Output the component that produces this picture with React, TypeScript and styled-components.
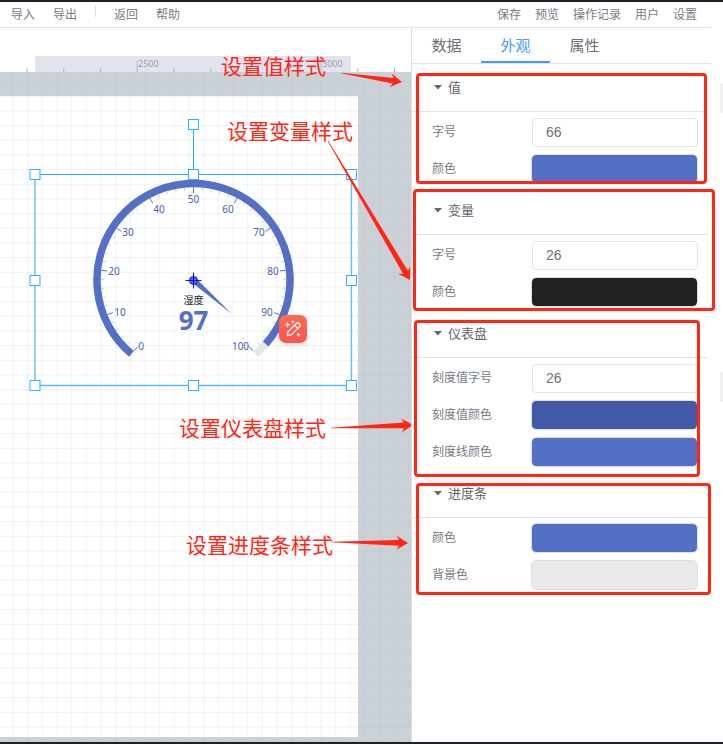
import React from "react";
import styled, { createGlobalStyle } from "styled-components";

const GlobalStyle = createGlobalStyle`
  * { box-sizing: border-box; }
  body { margin: 0; background: #fff; }
  body, button, input { font-family: "Liberation Sans", "Noto Sans CJK SC", sans-serif; }
  button { border: 0; padding: 0; background: none; cursor: pointer; }
`;

const RED = "#ff2616";
const BLUE = "#5470c6";
const SCALE = "#4a5fae";

const Page = styled.div`
  position: relative;
  display: flex;
  flex-direction: column;
  min-height: 100vh;
  border-top: 2px solid #222024;
  border-bottom: 2px solid #222024;
  overflow: hidden;
`;

const Header = styled.header`
  display: flex;
  justify-content: space-between;
  align-items: center;
  height: 26px;
  margin-right: 12px;
  padding: 0 14px 0 11px;
  border-bottom: 1px solid #e1e2e4;
`;

const Menu = styled.nav<{ $gap: number }>`
  display: flex;
  align-items: center;
  gap: ${(p) => p.$gap}px;
`;

const MenuButton = styled.button`
  font-size: 12px;
  line-height: 18px;
  color: #777b84;
  white-space: nowrap;
`;

const Separator = styled.span`
  align-self: flex-start;
  width: 1px;
  height: 11px;
  background: #dcdee2;
`;

const Main = styled.main`
  flex: 1;
  display: flex;
`;

const Workspace = styled.section`
  position: relative;
  flex: 1;
  min-width: 0;
  display: flex;
  flex-direction: column;
`;

const Ruler = styled.div`
  height: 44px;
  svg { display: block; width: 100%; height: 44px; }
`;

const Stage = styled.div`
  position: relative;
  flex: 1;
  overflow: hidden;
  display: flex;
  padding: 24px 53px 5px 0;
  background: #cad2d7;
`;

const Paper = styled.div`
  flex: 1;
  background: #fff;
`;

const Overlay = styled.svg`
  position: absolute;
  inset: 0;
  width: 100%;
  height: 100%;
  overflow: visible;
  pointer-events: none;
`;

const MagicButton = styled.button`
  position: absolute;
  left: 279px;
  top: 243px;
  width: 28px;
  height: 28px;
  border-radius: 7px;
  background: linear-gradient(#ff6b50, #ff5250);
  box-shadow: 0 2px 5px rgba(90, 90, 90, 0.2);
  svg { display: block; }
`;

const Note = styled.div<{ $x: number; $y: number }>`
  position: absolute;
  left: ${(p) => p.$x}px;
  top: ${(p) => p.$y}px;
  font-size: 21px;
  line-height: 28px;
  color: ${RED};
  white-space: nowrap;
`;

const Panel = styled.aside`
  position: relative;
  width: 300px;
  border-left: 1px solid #dcdee0;
`;

const Tabs = styled.div`
  display: flex;
  height: 36px;
  border-bottom: 1px solid #e1e2e4;
`;

const Tab = styled.button<{ $active?: boolean }>`
  width: 69px;
  font-size: 15px;
  color: ${(p) => (p.$active ? "#409eff" : "#6c7079")};
  border-bottom: 2px solid ${(p) => (p.$active ? "#409eff" : "transparent")};
`;

const Section = styled.section`
  padding-right: 4px;
`;

const SectionHead = styled.button`
  display: flex;
  align-items: center;
  gap: 6px;
  width: 100%;
  height: 48px;
  padding-left: 22px;
  border-bottom: 1px solid #e1e2e4;
  font-size: 13px;
  line-height: 18px;
  color: #5f646e;
`;

const Rows = styled.div`
  display: grid;
  grid-auto-rows: 36px;
  gap: 1px;
  padding: 2px 9px 0 20px;
`;

const Row = styled.div`
  display: flex;
  align-items: center;
  justify-content: space-between;
`;

const Label = styled.label`
  font-size: 12px;
  line-height: 18px;
  color: #777b84;
`;

const NumberField = styled.input`
  width: 166px;
  height: 29px;
  padding: 0 13px;
  border: 1px solid #e2e4e9;
  border-radius: 4px;
  font-size: 14px;
  color: #6c7079;
  outline: none;
`;

const ColorField = styled.input`
  appearance: none;
  width: 167px;
  height: 30px;
  padding: 0;
  border: 1px solid #dddfe4;
  border-radius: 5px;
  background: none;
  &::-webkit-color-swatch-wrapper { padding: 0; }
  &::-webkit-color-swatch { border: 0; border-radius: 4px; }
`;

const Frame = styled.div<{ $x: number; $y: number; $w: number; $h: number }>`
  position: absolute;
  left: ${(p) => p.$x}px;
  top: ${(p) => p.$y}px;
  width: ${(p) => p.$w}px;
  height: ${(p) => p.$h}px;
  border: 3px solid ${RED};
  border-radius: 4px;
  pointer-events: none;
`;

const Gutter = styled.div`
  width: 12px;
  padding-top: 55px;
  display: flex;
  flex-direction: column;
  align-items: flex-end;
  gap: 259px;
`;

const Grip = styled.span`
  width: 3px;
  height: 30px;
  border-radius: 3px 0 0 3px;
  background: #eff0f1;
`;

type Field = { label: string; kind: "number" | "color"; value: string };

const sections: { title: string; fields: Field[] }[] = [
  { title: "值", fields: [
    { label: "字号", kind: "number", value: "66" },
    { label: "颜色", kind: "color", value: "#5470c6" },
  ] },
  { title: "变量", fields: [
    { label: "字号", kind: "number", value: "26" },
    { label: "颜色", kind: "color", value: "#222222" },
  ] },
  { title: "仪表盘", fields: [
    { label: "刻度值字号", kind: "number", value: "26" },
    { label: "刻度值颜色", kind: "color", value: "#4159a7" },
    { label: "刻度线颜色", kind: "color", value: "#5470c6" },
  ] },
  { title: "进度条", fields: [
    { label: "颜色", kind: "color", value: "#5470c6" },
    { label: "背景色", kind: "color", value: "#e9e9e9" },
  ] },
];

const frames = [
  { x: 4, y: 45, w: 291, h: 111 },
  { x: 1, y: 161, w: 302, h: 122 },
  { x: 2, y: 292, w: 286, h: 157 },
  { x: 4, y: 455, w: 295, h: 112 },
];

const notes = [
  { text: "设置值样式", x: 221, y: 25 },
  { text: "设置变量样式", x: 227, y: 90 },
  { text: "设置仪表盘样式", x: 179, y: 387 },
  { text: "设置进度条样式", x: 186, y: 504 },
];

const arrows = [
  [341, 45, 402, 54],
  [328, 113, 410, 252],
  [331, 400, 413, 397],
  [331, 514, 408, 515],
];

function Arrow({ points }: { points: number[] }) {
  const [x1, y1, x2, y2] = points;
  const length = Math.hypot(x2 - x1, y2 - y1);
  const angle = (Math.atan2(y2 - y1, x2 - x1) * 180) / Math.PI;
  return (
    <path
      fill={RED}
      transform={`translate(${x1} ${y1}) rotate(${angle})`}
      d={`M0 -0.3L${length - 9} -2.8L${length - 11.5} -7L${length} 0L${length - 11.5} 7L${length - 9} 2.8L0 0.3Z`}
    />
  );
}

const CX = 193.5;
const CY = 208;
const angleOf = (value: number) => ((230 - value * 2.8) * Math.PI) / 180;
const at = (value: number, r: number) => {
  const a = angleOf(value);
  return [CX + r * Math.cos(a), CY - r * Math.sin(a)];
};
const arc = (from: number, to: number, r: number) => {
  const [x1, y1] = at(from, r);
  const [x2, y2] = at(to, r);
  return `M${x1} ${y1}A${r} ${r} 0 ${(to - from) * 2.8 > 180 ? 1 : 0} 1 ${x2} ${y2}`;
};

const labels = [
  [0, 141, 278], [10, 120, 244], [20, 114, 203], [30, 128, 164], [40, 159, 141], [50, 193.5, 131],
  [60, 228, 141], [70, 259, 164], [80, 273, 203], [90, 267, 244], [100, 240.5, 278],
];

const handles = [
  [193.5, 52.5], [35, 102.5], [193.5, 102.5], [351.5, 102.5],
  [35, 208.5], [351.5, 208.5], [35, 313.5], [193.5, 313.5], [351.5, 313.5],
];

function Grid() {
  const lines = Array.from({ length: 80 }, (_, i) => i);
  return (
    <Overlay aria-hidden="true">
      <g stroke="#b9bdb9" strokeOpacity="0.2">
        {lines.map((i) => <path key={`v${i}`} d={`M${12.9 + i * 14.67} 0V2000`} />)}
        {lines.map((i) => <path key={`h${i}`} d={`M0 ${9.5 + i * 14.67}H2000`} />)}
      </g>
    </Overlay>
  );
}

function Gauge() {
  const ticks = Array.from({ length: 51 }, (_, i) => i * 2);
  return (
    <Overlay role="img" aria-label="湿度 97">
      <path d={arc(97, 100, 96.5)} fill="none" stroke="#e6e7e9" strokeWidth="7.5" />
      <path d={arc(0, 97, 96.5)} fill="none" stroke={BLUE} strokeWidth="7.5" />
      {ticks.map((v) => {
        const major = v % 10 === 0;
        const [x1, y1] = at(v, 92.5);
        const [x2, y2] = at(v, major ? 87 : 89.5);
        return <path key={v} d={`M${x1} ${y1}L${x2} ${y2}`} stroke={BLUE} strokeWidth={major ? 1 : 0.7} strokeOpacity={major ? 1 : 0.5} />;
      })}
      <g fill={SCALE} fontFamily='"Noto Sans", sans-serif' fontSize="10" textAnchor="middle">
        {labels.map(([v, x, y]) => <text key={v} x={x} y={y}>{v}</text>)}
      </g>
      <path d="M0 -3L51 0L0 3Z" fill={BLUE} transform={`translate(${CX} ${CY}) rotate(41.6)`} />
      <circle cx={CX} cy={CY + 0.5} r="4" fill={BLUE} stroke="#1414e8" />
      <path d={`M${CX - 8} ${CY + 0.5}h16M${CX} ${CY - 7.5}v16`} stroke="#0d0df0" />
      <text x={CX} y="232" fill="#222" fontFamily='"Noto Sans CJK SC", sans-serif' fontSize="10" textAnchor="middle">湿度</text>
      <text x={CX} y="258" fill={BLUE} fontFamily='"Noto Sans", sans-serif' fontWeight="700" fontSize="26" textAnchor="middle">97</text>
      <path d="M35 102.5H351.5M193.5 52.5V102.5" stroke="#29aaf8" fill="none" />
      <path d="M35 102.5V313.5H351.5V102.5" stroke="#5bbdf9" strokeWidth="1.3" fill="none" />
      {handles.map(([x, y]) => (
        <rect key={`${x}-${y}`} x={x - 5} y={y - 5} width="10" height="10" fill="#fff" stroke="#35aff9" />
      ))}
    </Overlay>
  );
}

function RulerScale() {
  const ticks = Array.from({ length: 11 }, (_, i) => i);
  return (
    <Ruler>
      <svg aria-hidden="true">
        <rect x="35" y="28" width="316" height="16" fill="#e1e4f0" />
        {ticks.map((i) => {
          const major = i === 3 || i === 8;
          return <path key={i} d={`M${27 + i * 36.75} ${major ? 33 : 40}V44`} stroke="#b3b7c0" />;
        })}
        <g fill="#9ca0aa" fontFamily='"Noto Sans", sans-serif' fontSize="9">
          <text x="138" y="39">2500</text>
          <text x="322" y="39">3000</text>
        </g>
      </svg>
    </Ruler>
  );
}

function MagicIcon() {
  return (
    <svg width="28" height="28" viewBox="0 0 28 28" fill="none" stroke="#fff" strokeWidth="1.3" strokeLinejoin="round" strokeLinecap="round">
      <path d="M8.3 20.7L9.1 16.7L17.5 8.3Q18.7 7.2 20 8.4L20.6 9Q21.8 10.3 20.6 11.6L12.2 19.9ZM15.7 10.2L18.7 13.2" />
      <g fill="#fff" stroke="none">
        <path d="M8.5 6.5Q8.8 9.3 11.3 9.6Q8.8 9.9 8.5 12.7Q8.2 9.9 5.7 9.6Q8.2 9.3 8.5 6.5Z" />
        <path d="M13.8 4.5Q14 6.5 15.7 6.7Q14 6.9 13.8 8.9Q13.6 6.9 11.9 6.7Q13.6 6.5 13.8 4.5Z" />
        <path d="M19.5 17.3Q19.8 19.5 21.8 19.8Q19.8 20.1 19.5 22.3Q19.2 20.1 17.2 19.8Q19.2 19.5 19.5 17.3Z" />
      </g>
    </svg>
  );
}

export default function App() {
  return (
    <Page>
      <GlobalStyle />
      <Header>
        <Menu $gap={18}>
          <MenuButton>导入</MenuButton>
          <MenuButton>导出</MenuButton>
          <Separator />
          <MenuButton>返回</MenuButton>
          <MenuButton>帮助</MenuButton>
        </Menu>
        <Menu $gap={14}>
          <MenuButton>保存</MenuButton>
          <MenuButton>预览</MenuButton>
          <MenuButton>操作记录</MenuButton>
          <MenuButton>用户</MenuButton>
          <MenuButton>设置</MenuButton>
        </Menu>
      </Header>
      <Main>
        <Workspace>
          <RulerScale />
          <Stage>
            <Paper />
            <Grid />
            <Gauge />
            <MagicButton aria-label="美化"><MagicIcon /></MagicButton>
          </Stage>
          {notes.map((n) => <Note key={n.text} $x={n.x} $y={n.y}>{n.text}</Note>)}
          <Overlay aria-hidden="true">
            {arrows.map((a) => <Arrow key={a.join()} points={a} />)}
          </Overlay>
        </Workspace>
        <Panel>
          <Tabs role="tablist">
            <Tab role="tab">数据</Tab>
            <Tab role="tab" aria-selected="true" $active>外观</Tab>
            <Tab role="tab">属性</Tab>
          </Tabs>
          {sections.map((s, i) => (
            <Section key={s.title}>
              <SectionHead aria-expanded="true">
                <svg width="8" height="5" viewBox="0 0 8 5" fill="#5f646e"><path d="M0 0H8L4 4.5Z" /></svg>
                {s.title}
              </SectionHead>
              <Rows>
                {s.fields.map((f, j) => {
                  const id = `field-${i}-${j}`;
                  return (
                    <Row key={id}>
                      <Label htmlFor={id}>{f.label}</Label>
                      {f.kind === "number"
                        ? <NumberField id={id} type="text" inputMode="numeric" defaultValue={f.value} />
                        : <ColorField id={id} type="color" defaultValue={f.value} />}
                    </Row>
                  );
                })}
              </Rows>
            </Section>
          ))}
          {frames.map((f) => <Frame key={f.y} $x={f.x} $y={f.y} $w={f.w} $h={f.h} />)}
        </Panel>
        <Gutter>
          <Grip />
          <Grip />
        </Gutter>
      </Main>
    </Page>
  );
}
